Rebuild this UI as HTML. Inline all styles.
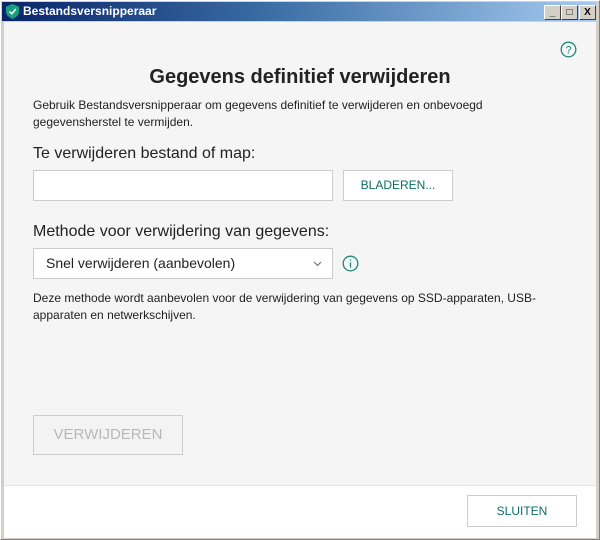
<!DOCTYPE html>
<html><head><style>
body{margin:0;width:600px;height:540px;overflow:hidden;font-family:"Liberation Sans",sans-serif;background:#d4d0c8;position:relative}
.win{position:absolute;left:0;top:0;width:598px;height:538px;border:1px solid #808080;border-top-color:#fff;border-left-color:#fff;}
.tb{position:absolute;left:2px;top:2px;width:594px;height:19px;background:linear-gradient(90deg,#0a246a,#3a6ea5 45%,#a6caf0);color:#fff;font-weight:bold;font-size:12px;line-height:19px}
.tb span{position:absolute;left:21px}
.btn3{position:absolute;top:3px;width:15px;height:13px;background:#d4d0c8;border:1px solid;border-color:#fff #404040 #404040 #fff;color:#000;font-size:10px;line-height:13px;text-align:center}
.content{position:absolute;left:4px;top:22px;width:592px;height:463px;background:#f5f5f5}
.footer{position:absolute;left:4px;top:485px;width:592px;height:52px;background:#fff;border-top:1px solid #e4e4e4}
.a{position:absolute;color:#222}
.box{position:absolute;background:#fff;border:1px solid #ccc;box-sizing:border-box}
</style></head><body>
<div class="win"></div>
<div class="tb"><svg style="position:absolute;left:4px;top:2px" width="13" height="15"><path d="M6.5 0 L13 2.5 V8 Q13 12 6.5 15 Q0 12 0 8 V2.5Z" fill="#1a9f7e"/><path d="M3.5 7.5 L5.8 9.8 L9.8 5" stroke="#fff" stroke-width="1.5" fill="none"/></svg><span>Bestandsversnipperaar</span>
<div class="btn3" style="left:542px">_</div><div class="btn3" style="left:559px">□</div><div class="btn3" style="left:577px;font-weight:bold">X</div></div>
<div class="content"></div>
<div class="footer"></div>
<svg style="position:absolute;left:560px;top:41px" width="17" height="17"><circle cx="8.5" cy="8.5" r="7.3" fill="none" stroke="#1a8a7a" stroke-width="1.3"/><text x="8.5" y="12.5" font-size="11" text-anchor="middle" fill="#1a8a7a" font-family="Liberation Sans">?</text></svg>
<div class="a" style="left:0;width:600px;text-align:center;top:66px;font-size:20px;font-weight:bold;color:#222">Gegevens definitief verwijderen</div>
<div class="a" style="left:33px;top:97px;font-size:12px;line-height:17px;width:540px">Gebruik Bestandsversnipperaar om gegevens definitief te verwijderen en onbevoegd gegevensherstel te vermijden.</div>
<div class="a" style="left:33px;top:145px;font-size:16px">Te verwijderen bestand of map:</div>
<div class="box" style="left:33px;top:170px;width:300px;height:31px"></div>
<div class="box" style="left:343px;top:170px;width:110px;height:31px;text-align:center;line-height:29px;font-size:12px;color:#0b6e66">BLADEREN...</div>
<div class="a" style="left:33px;top:223px;font-size:16px">Methode voor verwijdering van gegevens:</div>
<div class="box" style="left:33px;top:248px;width:300px;height:31px;line-height:29px;font-size:14px;padding-left:12px;color:#222">Snel verwijderen (aanbevolen)<svg style="position:absolute;right:10px;top:12px" width="9" height="6"><path d="M1 1 L4.5 4.5 L8 1" stroke="#666" fill="none"/></svg></div>
<svg style="position:absolute;left:342px;top:255px" width="17" height="17"><circle cx="8.5" cy="8.5" r="7.3" fill="none" stroke="#1a8a7a" stroke-width="1.3"/><path d="M8.5 7.5V12.5M8.5 4.5V5.8" stroke="#1a8a7a" stroke-width="1.3"/></svg>
<div class="a" style="left:33px;top:290px;font-size:12px;line-height:17px;width:520px">Deze methode wordt aanbevolen voor de verwijdering van gegevens op SSD-apparaten, USB-apparaten en netwerkschijven.</div>
<div class="box" style="left:33px;top:415px;width:150px;height:40px;background:#f4f3f4;text-align:center;line-height:38px;font-size:15px;color:#b8b8b8">VERWIJDEREN</div>
<div class="box" style="left:467px;top:495px;width:110px;height:32px;text-align:center;line-height:30px;font-size:12px;color:#0b6e66">SLUITEN</div>
</body></html>
